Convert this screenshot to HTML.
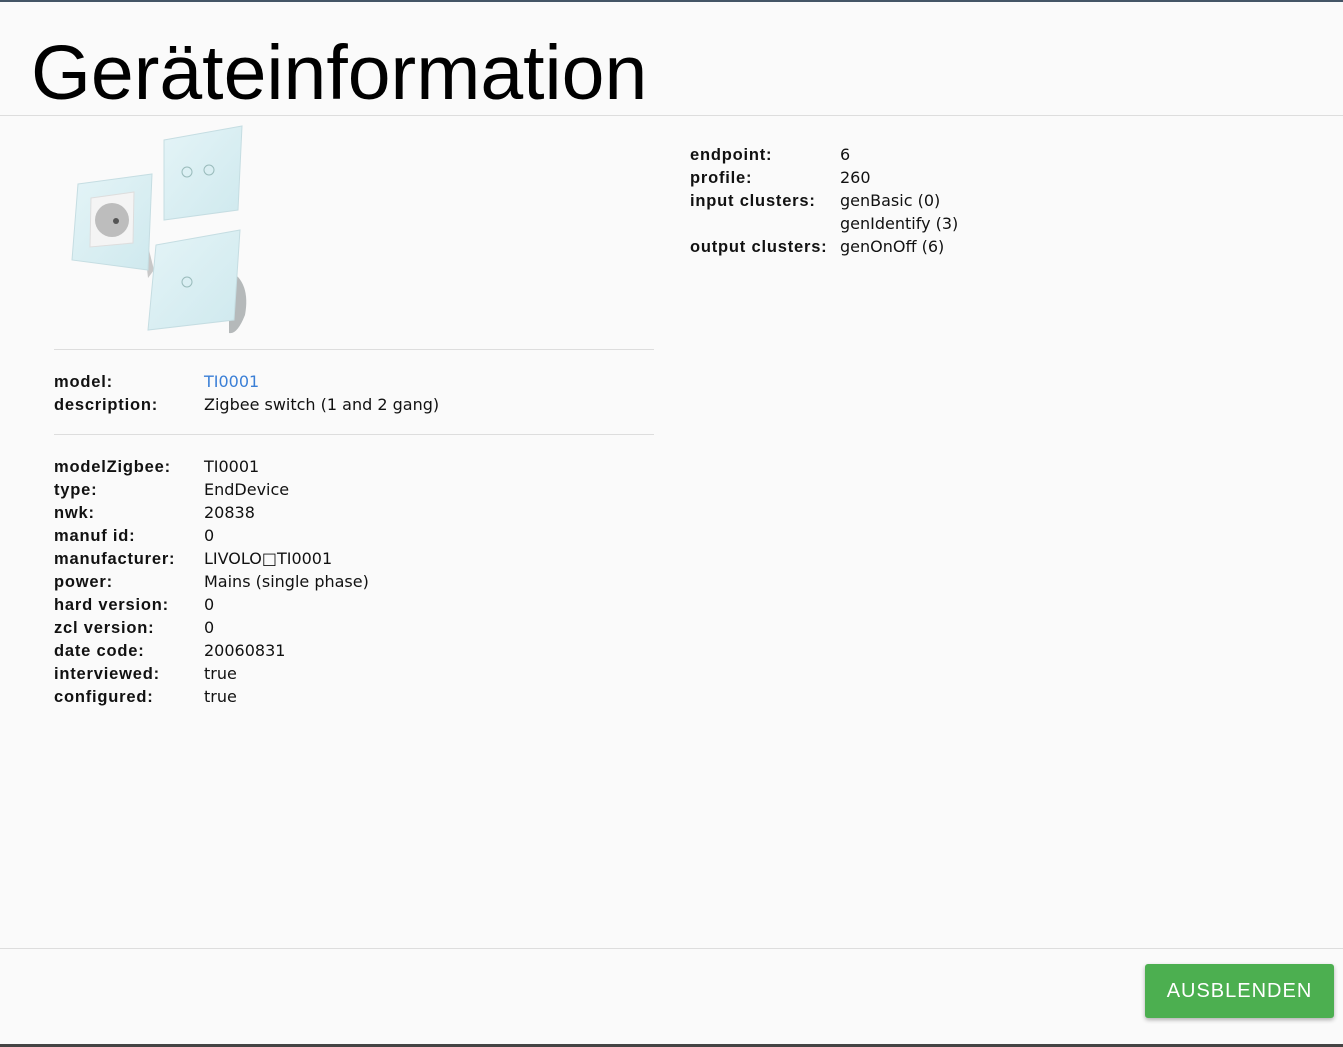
<!DOCTYPE html>
<html><head><meta charset="utf-8"><style>
html,body{margin:0;padding:0;}
body{width:1343px;height:1047px;background:#fafafa;font-family:"Liberation Sans",sans-serif;color:#111;position:relative;overflow:hidden;}
.topline{position:absolute;left:0;top:0;width:1343px;height:2px;background:#445566;}
.botline{position:absolute;left:0;top:1044px;width:1343px;height:3px;background:#444;}
h1{position:absolute;left:31px;top:28px;margin:0;font-weight:normal;font-size:77px;line-height:90px;color:#000;}
.hr{position:absolute;height:1px;background:#ddd;}
table{position:absolute;border-collapse:collapse;font-size:16px;font-family:"DejaVu Sans",sans-serif}
td{padding:0;height:23px;line-height:23px;vertical-align:top}
td.l{font-weight:bold;width:150px;font-family:"Liberation Sans",sans-serif;font-size:16.5px;letter-spacing:0.8px;line-height:22px;height:22px;padding-top:1px}
a{color:#3b7fd6;text-decoration:none}
.btn{position:absolute;left:1145px;top:964px;width:189px;height:54px;background:#4caf50;border-radius:3px;color:#fff;font-size:20px;line-height:54px;text-align:center;letter-spacing:1px;box-shadow:0 2px 4px rgba(0,0,0,.3)}
</style></head><body>
<div class="topline"></div>
<h1>Geräteinformation</h1>
<div class="hr" style="left:0;top:115px;width:1343px"></div>
<svg style="position:absolute;left:54px;top:120px" width="200" height="228">
<defs><linearGradient id="g" x1="0" y1="0" x2="1" y2="1"><stop offset="0" stop-color="#e4f4f7"/><stop offset="1" stop-color="#cfe9ee"/></linearGradient></defs>
<path d="M165 45 q18 10 14 30 q-4 14 -14 14z" fill="#b9bcbd"/>
<path d="M110 20 L188 6 L184 90 L110 100z" fill="url(#g)" stroke="#c5dde2"/>
<circle cx="133" cy="52" r="5" fill="none" stroke="#9bb"/><circle cx="155" cy="50" r="5" fill="none" stroke="#9bb"/>
<path d="M90 120 L95 130 L100 150 L94 158z" fill="#c8c8c8"/>
<path d="M24 64 L98 54 L94 150 L18 140z" fill="url(#g)" stroke="#c5dde2"/>
<path d="M37 78 L80 72 L79 123 L36 127z" fill="#f4f4f4" stroke="#ddd"/>
<circle cx="58" cy="100" r="17" fill="#bdbdbd"/><circle cx="62" cy="101" r="3" fill="#555"/>
<path d="M175 150 q22 12 16 45 q-8 20 -16 18z" fill="#b5b9ba"/>
<path d="M102 125 L186 110 L180 200 L94 210z" fill="url(#g)" stroke="#c5dde2"/>
<circle cx="133" cy="162" r="5" fill="none" stroke="#9bb"/>
</svg>
<div class="hr" style="left:54px;top:349px;width:600px"></div>
<table style="left:54px;top:370px">
<tr><td class="l">model:</td><td><a>TI0001</a></td></tr>
<tr><td class="l">description:</td><td>Zigbee switch (1 and 2 gang)</td></tr>
</table>
<div class="hr" style="left:54px;top:434px;width:600px"></div>
<table style="left:54px;top:455px">
<tr><td class="l">modelZigbee:</td><td>TI0001</td></tr>
<tr><td class="l">type:</td><td>EndDevice</td></tr>
<tr><td class="l">nwk:</td><td>20838</td></tr>
<tr><td class="l">manuf id:</td><td>0</td></tr>
<tr><td class="l">manufacturer:</td><td>LIVOLO&#9633;TI0001</td></tr>
<tr><td class="l">power:</td><td>Mains (single phase)</td></tr>
<tr><td class="l">hard version:</td><td>0</td></tr>
<tr><td class="l">zcl version:</td><td>0</td></tr>
<tr><td class="l">date code:</td><td>20060831</td></tr>
<tr><td class="l">interviewed:</td><td>true</td></tr>
<tr><td class="l">configured:</td><td>true</td></tr>
</table>
<table style="left:690px;top:143px">
<tr><td class="l">endpoint:</td><td>6</td></tr>
<tr><td class="l">profile:</td><td>260</td></tr>
<tr><td class="l">input clusters:</td><td>genBasic (0)<br>genIdentify (3)</td></tr>
<tr><td class="l">output clusters:</td><td>genOnOff (6)</td></tr>
</table>
<div class="hr" style="left:0;top:948px;width:1343px"></div>
<div class="btn">AUSBLENDEN</div>
<div class="botline"></div>
</body></html>
